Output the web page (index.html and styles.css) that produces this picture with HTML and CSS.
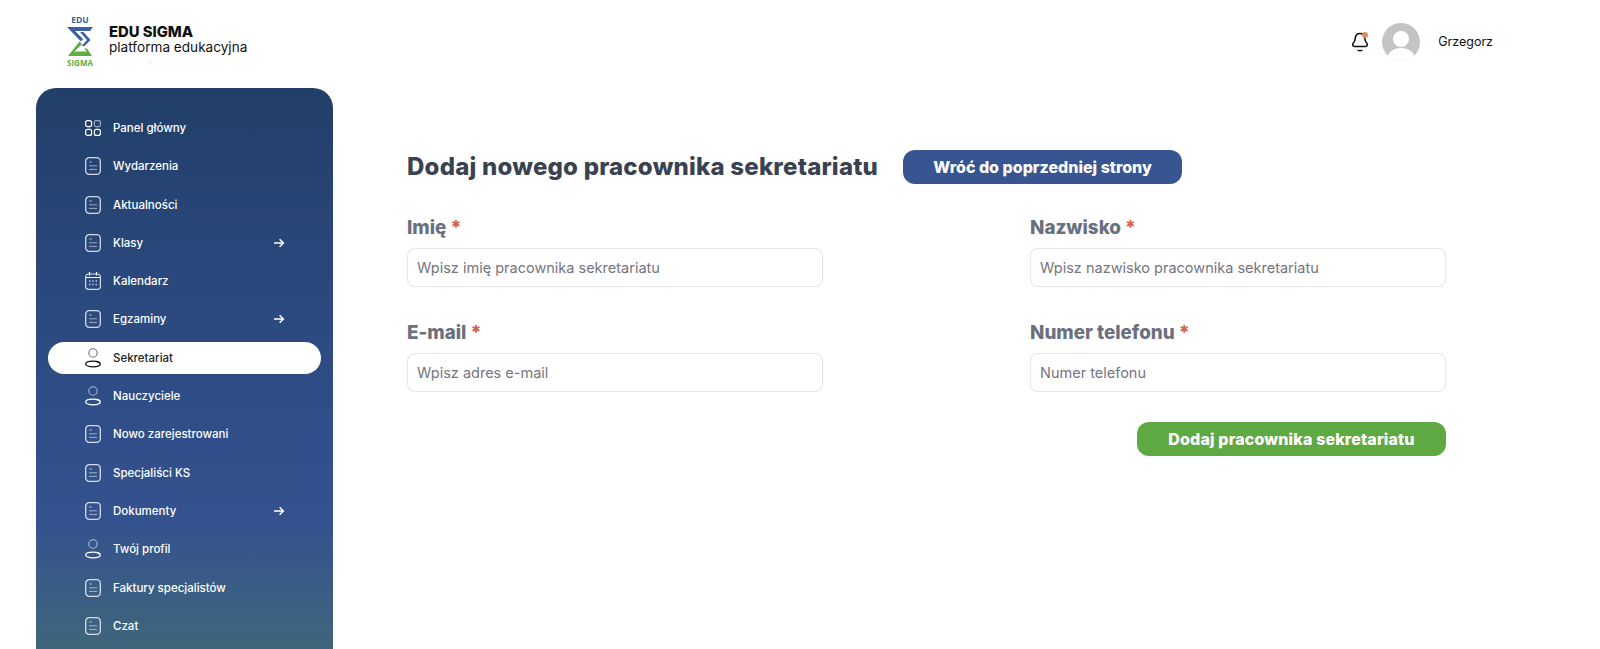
FILE: index.html
```html
<!DOCTYPE html>
<html lang="pl">
<head>
<meta charset="utf-8">
<title>EDU SIGMA</title>
<link rel="stylesheet" href="styles.css">
</head>
<body>
<svg class="defs" width="0" height="0" aria-hidden="true">
  <symbol id="doc" viewBox="0 0 16 18"><rect x=".7" y=".7" width="14.6" height="16.6" rx="3.600" fill="none" stroke="currentColor" stroke-opacity=".8" stroke-width="1.300"/><path d="M4 5h3M4 8.800h8M4 12.400h8" fill="none" stroke="currentColor" stroke-opacity=".55" stroke-width="1"/></symbol>
  <symbol id="user" viewBox="0 0 16 20"><circle cx="8" cy="5" r="4.200" fill="none" stroke="currentColor" stroke-opacity=".6" stroke-width="1.100"/><ellipse cx="8" cy="16" rx="7.300" ry="2.800" fill="none" stroke="currentColor" stroke-width="1.300"/></symbol>
  <symbol id="arrow" viewBox="0 0 12 10"><path d="M1 5h9.200M6.600 1.200 10.400 5 6.600 8.800" fill="none" stroke="currentColor" stroke-width="1.500"/></symbol>
</svg>
<header class="top">
  <div class="brand">
    <svg class="logo" viewBox="0 0 30 52">
      <text x="15" y="7.500" class="logo-edu">EDU</text>
      <path d="M2 12h26l-3 4H10l8 8-2 2.500z" fill="#3a5fa5"/>
      <path d="M15 17h3.500l7 8-6 6h-3l5.500-6z" fill="#3a5fa5"/>
      <path d="M14.500 26.500l2.500 2.500-7.500 7.500H22l-3-3h3l5 7.500H3z" fill="#62ad43"/>
      <text x="15" y="50.500" class="logo-sigma">SIGMA</text>
    </svg>
    <div class="brand-text">
      <strong>EDU SIGMA</strong>
      <span>platforma edukacyjna</span>
    </div>
  </div>
  <div class="account">
    <svg class="bell" viewBox="0 0 18 22"><path d="M9 2.500c-3 0-4.600 2.200-4.800 5-.1 2.400-.8 3.500-2 4.800-1 1.200-.5 3.200 1.300 3.200h11c1.800 0 2.300-2 1.300-3.200-1.200-1.300-1.900-2.400-2-4.800-.2-2.800-1.800-5-4.800-5z" fill="none" stroke="#111" stroke-width="1.600"/><path d="M6.500 19c1.500 1 3.500 1 5 0" fill="none" stroke="#111" stroke-width="1.400"/><circle cx="14" cy="4" r="3" fill="#e08a5e"/></svg>
    <svg class="avatar" viewBox="0 0 38 38"><defs><clipPath id="av"><circle cx="19" cy="19" r="19"/></clipPath></defs><g clip-path="url(#av)"><rect width="38" height="38" fill="#c4c4c4"/><circle cx="19" cy="16" r="8" fill="#fff"/><path d="M5 34c2-6 8-9 14-9s12 3 14 9v6H5z" fill="#fff"/></g></svg>
    <span class="name">Grzegorz</span>
  </div>
</header>
<div class="layout">
  <nav class="sidebar">
    <a class="item"><svg class="ico" viewBox="0 0 16 16"><g fill="none" stroke="currentColor" stroke-width="1.200"><rect x=".6" y=".6" width="6" height="6" rx="2"/><rect x="9.400" y=".6" width="6" height="6" rx="1.500" stroke-opacity=".55"/><rect x=".6" y="9.400" width="6" height="6" rx="2"/><rect x="9.400" y="9.400" width="6" height="6" rx="2"/></g></svg><span>Panel główny</span></a>
    <a class="item"><svg class="ico"><use href="#doc"/></svg><span>Wydarzenia</span></a>
    <a class="item"><svg class="ico"><use href="#doc"/></svg><span>Aktualności</span></a>
    <a class="item"><svg class="ico"><use href="#doc"/></svg><span>Klasy</span><svg class="arr"><use href="#arrow"/></svg></a>
    <a class="item"><svg class="ico" viewBox="0 0 16 18"><g fill="none" stroke="currentColor"><rect x=".6" y="2" width="14.800" height="15.400" rx="3.200" stroke-opacity=".8" stroke-width="1.200"/><path d="M4.500 0v3.500M11.500 0v3.500M1 5.500h14" stroke-width="1.200"/><path d="M4 9h1.500M7.300 9h1.500M10.600 9H12M4 12.500h1.500M7.300 12.500h1.500M10.600 12.500H12" stroke-opacity=".7" stroke-width="1.300"/></g></svg><span>Kalendarz</span></a>
    <a class="item"><svg class="ico"><use href="#doc"/></svg><span>Egzaminy</span><svg class="arr"><use href="#arrow"/></svg></a>
    <a class="item active"><svg class="ico user"><use href="#user"/></svg><span>Sekretariat</span></a>
    <a class="item"><svg class="ico user"><use href="#user"/></svg><span>Nauczyciele</span></a>
    <a class="item"><svg class="ico"><use href="#doc"/></svg><span>Nowo zarejestrowani</span></a>
    <a class="item"><svg class="ico"><use href="#doc"/></svg><span>Specjaliści KS</span></a>
    <a class="item"><svg class="ico"><use href="#doc"/></svg><span>Dokumenty</span><svg class="arr"><use href="#arrow"/></svg></a>
    <a class="item"><svg class="ico user"><use href="#user"/></svg><span>Twój profil</span></a>
    <a class="item"><svg class="ico"><use href="#doc"/></svg><span>Faktury specjalistów</span></a>
    <a class="item"><svg class="ico"><use href="#doc"/></svg><span>Czat</span></a>
  </nav>
  <main class="content">
    <div class="title-row">
      <h1>Dodaj nowego pracownika sekretariatu</h1>
      <button class="btn btn-blue" type="button">Wróć do poprzedniej strony</button>
    </div>
    <form class="form">
      <label class="field"><span class="lbl">Imię <i>*</i></span><input type="text" placeholder="Wpisz imię pracownika sekretariatu"></label>
      <label class="field"><span class="lbl">Nazwisko <i>*</i></span><input type="text" placeholder="Wpisz nazwisko pracownika sekretariatu"></label>
      <label class="field"><span class="lbl">E-mail <i>*</i></span><input type="text" placeholder="Wpisz adres e-mail"></label>
      <label class="field"><span class="lbl">Numer telefonu <i>*</i></span><input type="text" placeholder="Numer telefonu"></label>
      <div class="actions"><button class="btn btn-green" type="button">Dodaj pracownika sekretariatu</button></div>
    </form>
  </main>
</div>
</body>
</html>
```
FILE: styles.css
```css
* { box-sizing: border-box; }
html, body { margin: 0; height: 649px; overflow: hidden; background: #fff; }
body { font-family: "Inter", "Open Sans", sans-serif; color: #111; }
.defs { display: block; height: 0; }

.top { height: 88px; display: flex; align-items: center; justify-content: space-between; padding: 0 107px 6px 65px; }
.brand { display: flex; align-items: center; gap: 14px; }
.logo { width: 30px; height: 52px; display: block; }
.logo-edu, .logo-sigma { font-family: "Open Sans", sans-serif; font-weight: 700; font-size: 8.500px; text-anchor: middle; }
.logo-edu { fill: #3a5fa5; }
.logo-sigma { fill: #62ad43; font-size: 8px; }
.brand-text { display: flex; flex-direction: column; margin-top: -5px; }
.brand-text strong { font-size: 14.800px; font-weight: 800; line-height: 16px; }
.brand-text span { font-size: 13.600px; line-height: 14px; }

.account { display: flex; align-items: center; padding-top: 2px; }
.bell { width: 18px; height: 22px; margin-right: 13px; }
.avatar { width: 38px; height: 38px; margin-right: 18px; }
.name { font-size: 12.500px; margin-top: -2px; }

.layout { display: flex; align-items: flex-start; padding-left: 36px; }
.sidebar { width: 297px; height: 561px; flex: none; overflow: hidden; border-radius: 20px 20px 0 0; padding: 24px 12px 0; color: #fff;
  background: linear-gradient(180deg, #223f69 0%, #2f4e88 57%, #34528f 77%, #3c6180 94%, #3f667c 100%); }
.item { display: flex; align-items: center; height: 32px; margin-bottom: 6.300px; padding: 0 36px 0 37px; border-radius: 16px; font-size: 11.500px; font-weight: 500; color: #fff; }
.item span { flex: 1; margin-left: 12px; }
.ico { width: 16px; height: 18px; flex: none; color: #fff; }
.ico.user { height: 20px; }
.arr { width: 12px; height: 10px; flex: none; color: #fff; }
.item.active { background: #fff; color: #222; }
.item.active .ico { color: #111; }

.content { flex: 1; padding: 62px 154px 0 74px; }
.title-row { display: flex; align-items: center; gap: 25px; height: 33px; }
h1 { margin: 0; font-size: 24px; font-weight: 800; color: #3a4252; letter-spacing: .22px; white-space: nowrap; }
.btn { border: 0; border-radius: 12px; height: 34px; font-family: inherit; font-weight: 800; font-size: 16px; color: #fff; }
.btn-blue { background: #365591; width: 279px; }
.btn-green { background: #5fa943; width: 309px; letter-spacing: .15px; }

.form { display: grid; grid-template-columns: 416px 416px; justify-content: space-between; row-gap: 33px; margin-top: 32px; }
.field { display: block; }
.lbl { display: block; font-size: 18.800px; font-weight: 800; color: #6b7080; line-height: 26px; margin-bottom: 7px; }
.lbl i { font-style: normal; color: #d9604c; }
input { display: block; width: 100%; height: 39px; border: 1px solid #e6e6ea; border-radius: 8px; padding: 0 9px; font-family: inherit; font-size: 14.500px; background: #fff; outline: 0; box-shadow: 0 0 1px rgba(0,0,0,.06); }
input::placeholder { color: #75757f; opacity: 1; }
.actions { grid-column: 1 / -1; display: flex; justify-content: flex-end; margin-top: -3px; }
```
